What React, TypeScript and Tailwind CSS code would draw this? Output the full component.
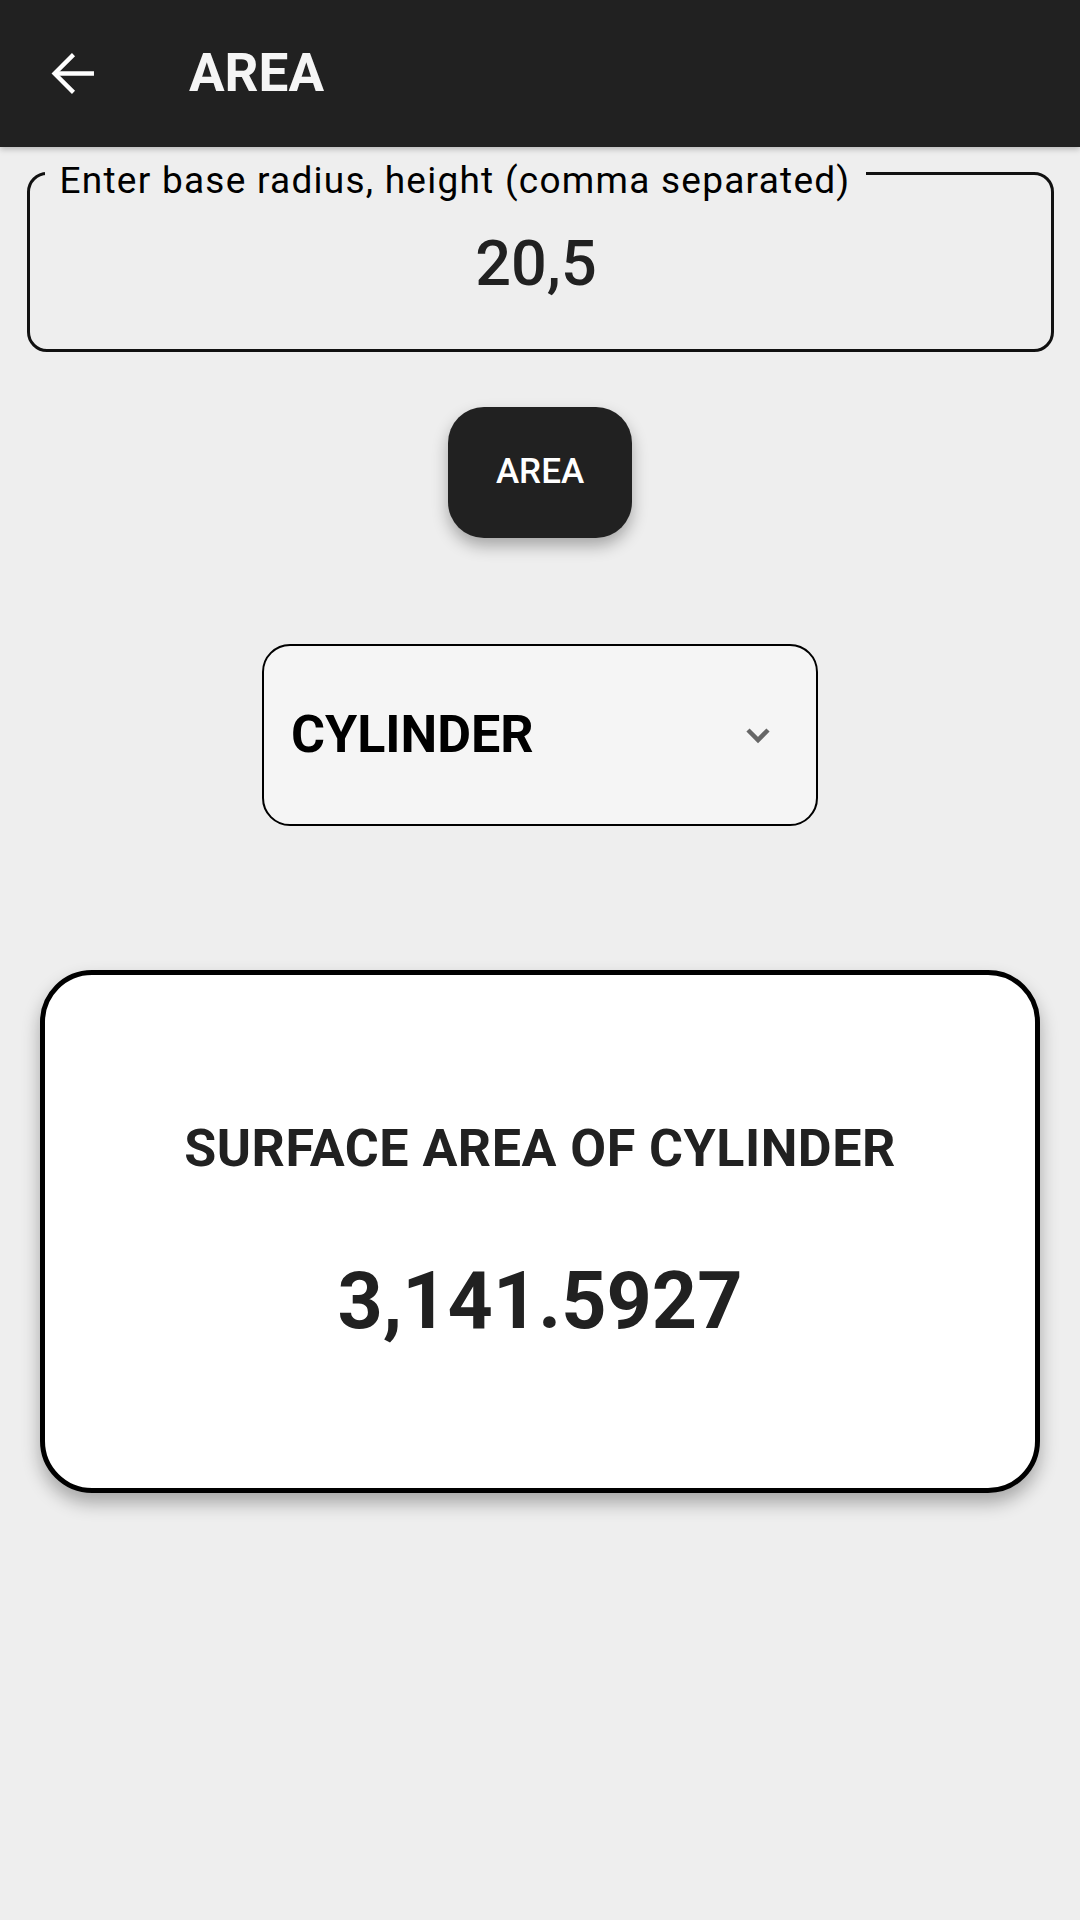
export default function App() {
  return (
    <div className="min-h-[1920px] w-[1080px] bg-[#eeeeee] font-['Roboto','Liberation_Sans',sans-serif]">
      <header className="relative z-10 flex h-[147px] items-center bg-[#212121] shadow-[0_2px_6px_rgba(0,0,0,0.25)]">
        <svg
          className="ml-[42px] h-[63px] w-[63px]"
          viewBox="0 0 24 24"
          fill="none"
          stroke="#ffffff"
          strokeWidth="1.65"
        >
          <path d="M19.8 12H5.2" />
          <path d="M12 4.8 4.8 12l7.2 7.2" />
        </svg>
        <h1 className="ml-[84px] text-[53px] leading-none font-bold text-[#f5f5f5]">
          AREA
        </h1>
      </header>

      <main className="flex flex-col items-center">
        <div className="relative mt-[25px] flex h-[180px] w-[1027px] items-center justify-center rounded-[20px] border-[3px] border-[#111111]">
          <span className="absolute top-[-13px] left-[15px] bg-[#eeeeee] px-[15px] text-[37px] leading-none tracking-[1.25px] text-black">
            Enter base radius, height (comma separated)
          </span>
          <span className="mt-[2px] pr-[8px] text-[63px] leading-none font-medium text-[#212121]">
            20,5
          </span>
        </div>

        <button className="mt-[55px] flex h-[131px] w-[184px] items-center justify-center rounded-[36px] bg-[#212121] text-[35px] font-medium text-white shadow-[0_8px_16px_rgba(0,0,0,0.3)]">
          AREA
        </button>

        <div className="mt-[106px] flex h-[182px] w-[556px] items-center justify-between rounded-[28px] border-[2.5px] border-black bg-[#f5f5f5] pr-[43px] pl-[27px]">
          <span className="text-[52px] leading-none font-bold text-black">
            CYLINDER
          </span>
          <svg className="h-[30px] w-[30px]" viewBox="0 0 24 24" fill="none">
            <path
              d="M4 8l8 8 8-8"
              stroke="#666666"
              strokeWidth="3.6"
              strokeLinecap="butt"
            />
          </svg>
        </div>

        <div className="mt-[144px] flex h-[523px] w-[1000px] flex-col items-center rounded-[52px] border-[5px] border-black bg-white pt-[148px] shadow-[0_10px_18px_rgba(0,0,0,0.3)]">
          <p className="text-[52px] leading-none font-bold tracking-[0.5px] text-[#212121]">
            SURFACE AREA OF CYLINDER
          </p>
          <p className="mt-[87px] text-[79px] leading-none font-bold text-[#212121]">
            3,141.5927
          </p>
        </div>
      </main>
    </div>
  );
}
